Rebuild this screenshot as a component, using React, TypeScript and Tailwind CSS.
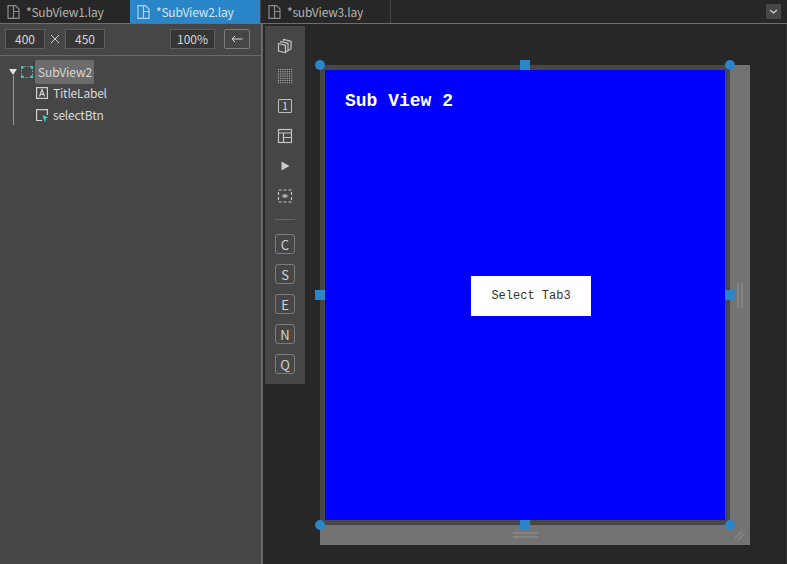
import { ReactNode } from "react";

function FileIcon({ color }: { color: string }) {
  return (
    <svg width="13" height="14" viewBox="0 0 13 14" fill="none" stroke={color} strokeWidth="1.2">
      <path d="M1 .6h7.500l3.500 3.500v9.300H1z" />
      <path d="M6.500 .6v12.800M6.500 6.500H12" />
    </svg>
  );
}

function Tab({ label, active, width }: { label: string; active?: boolean; width: string }) {
  return (
    <div className={`flex h-[23px] items-center gap-[6px] pl-[7px] ${width} ${active ? "bg-[#2a86c9] text-[#d6e6f2]" : "bg-[#272727] text-[#b4b4b4]"}`}>
      <FileIcon color={active ? "#b5d3ea" : "#8c8c8c"} />
      <span className="text-[12px] leading-none tracking-[-0.2px]">{label}</span>
    </div>
  );
}

function Field({ children, width }: { children: ReactNode; width: string }) {
  return (
    <div className={`flex h-5 items-center justify-center border border-[#5e5e5e] bg-[#363636] text-[12px] text-[#d8d8d8] ${width}`}>
      {children}
    </div>
  );
}

function TreeRow({ icon, label }: { icon: ReactNode; label: string }) {
  return (
    <div className="flex h-[22px] items-center gap-[5px] pl-9 text-[12px] tracking-[-0.2px] text-[#d8d8d8]">
      {icon}
      <span>{label}</span>
    </div>
  );
}

function ToolIcon({ children }: { children: ReactNode }) {
  return (
    <div className="flex h-[30px] w-10 items-center justify-center">
      <svg width="16" height="16" viewBox="0 0 16 16" fill="none" stroke="#c4c4c4" strokeWidth="1.2">
        {children}
      </svg>
    </div>
  );
}

function KeyButton({ label }: { label: string }) {
  return (
    <div className="flex h-[30px] w-10 items-center justify-center">
      <div className="flex h-5 w-5 items-center justify-center rounded-[3px] border border-[#7c7c7c] text-[13px] leading-none text-[#d4d4d4]">
        {label}
      </div>
    </div>
  );
}

const dots = Array.from({ length: 49 }, (_, i) => ({ x: 1.5 + (i % 7) * 2.2, y: 1.5 + Math.floor(i / 7) * 2.2 }));

function Handle({ className }: { className: string }) {
  return <div className={`absolute h-2.5 w-2.5 bg-[#2a86c9] ${className}`} />;
}

export default function App() {
  return (
    <div className="flex h-[564px] w-[787px] flex-col overflow-hidden bg-[#272727] font-['Noto_Sans_CJK_KR','Noto_Sans',sans-serif]">
      <div className="flex h-6 shrink-0 border-b border-[#6e6e6e] bg-[#272727]">
        <Tab label="*SubView1.lay" width="w-[130px]" />
        <Tab label="*SubView2.lay" active width="w-[130px]" />
        <div className="h-[23px] w-px bg-[#444444]" />
        <Tab label="*subView3.lay" width="w-[129px]" />
        <div className="h-[23px] w-px bg-[#444444]" />
        <div className="ml-auto mr-[6px] mt-1 flex h-[15px] w-[15px] items-center justify-center bg-[#464646]">
          <svg width="9" height="6" viewBox="0 0 9 6" fill="none" stroke="#d0d0d0" strokeWidth="1.3">
            <path d="M1 1l3.500 3L8 1" />
          </svg>
        </div>
      </div>

      <div className="flex min-h-0 flex-1">
        <div className="w-[261px] shrink-0 bg-[#464646]">
          <div className="flex h-8 items-center border-b border-[#6a6a6a] pb-[1px] pl-[5px]">
            <Field width="w-10">400</Field>
            <svg className="mx-[5px]" width="10" height="10" viewBox="0 0 10 10" stroke="#cccccc" strokeWidth="1">
              <path d="M1 1l8 8M9 1l-8 8" />
            </svg>
            <Field width="w-10">450</Field>
            <Field width="ml-[65px] w-[45px]">100%</Field>
            <div className="ml-[9px] flex h-5 w-[26px] items-center justify-center rounded-[2px] border border-[#7c7c7c] text-[#d8d8d8]">
              <svg width="12" height="8" viewBox="0 0 12 8" fill="none" stroke="#d8d8d8" strokeWidth="1">
                <path d="M11.500 4H1M4 1L1 4l3 3" />
              </svg>
            </div>
          </div>

          <div className="relative pt-1">
            <div className="absolute left-[13px] top-[20px] h-[49px] w-px bg-[#57b8ad]" />
            <div className="flex h-6 items-center pl-[9px]">
              <div className="h-0 w-0 border-x-[4px] border-t-[6px] border-x-transparent border-t-[#e0e0e0]" />
              <svg className="ml-[4px]" width="12" height="12" viewBox="0 0 12 12" fill="none">
                <rect x=".5" y=".5" width="11" height="11" stroke="#9a9a9a" strokeDasharray="1.500 1.500" />
                <path d="M0 0h2.500v2.500H0zM9.500 0H12v2.500H9.500zM0 9.500h2.500V12H0zM9.500 9.500H12V12H9.500z" fill="#35d6c2" />
              </svg>
              <div className="ml-[2px] flex h-6 w-[59px] items-center rounded-[2px] bg-[#6c6c6c] pl-[3px] text-[12px] tracking-[-0.1px] text-[#d8d8d8]">SubView2</div>
            </div>
            <div className="-mt-[2px]">
              <TreeRow
                label="TitleLabel"
                icon={
                  <svg width="12" height="12" viewBox="0 0 12 12" fill="none" stroke="#d0d0d0" strokeWidth="1.200">
                    <rect x=".6" y=".6" width="10.800" height="10.800" />
                    <path d="M3.500 9.500L6 2.500l2.500 7M4.300 7.300h3.400" />
                  </svg>
                }
              />
              <TreeRow
                label="selectBtn"
                icon={
                  <svg width="12" height="13" viewBox="0 0 12 13" fill="none">
                    <path d="M6 11.500H.6V.6h10.800V6" stroke="#d0d0d0" strokeWidth="1.200" />
                    <path d="M7 6.500l4.500 2-1.800.8L8.800 12.500z" fill="#35d6c2" stroke="#35d6c2" strokeWidth=".6" />
                  </svg>
                }
              />
            </div>
          </div>
        </div>

        <div className="w-[2px] shrink-0 bg-[#6b6b6b]" />

        <div className="flex min-w-0 flex-1 items-start">
          <div className="ml-[2px] mt-[2px] flex w-10 shrink-0 flex-col items-center bg-[#464646] pb-[5px] pt-[5px]">
            <ToolIcon>
              <path d="M1.500 5.500l7 1.800v7.500l-7-1.800z" />
              <path d="M4 5V3.500l7 1.800v7.500l-2.500 1" />
              <path d="M6.500 3V1.500l7.500 1.800v7.700l-3 1.500" />
            </ToolIcon>
            <ToolIcon>
              <g fill="#bcbcbc" stroke="none">
                {dots.map((d) => (
                  <rect key={`${d.x}-${d.y}`} x={d.x - 0.5} y={d.y - 0.5} width="1" height="1" />
                ))}
              </g>
            </ToolIcon>
            <div className="flex h-[30px] w-10 items-center justify-center">
              <div className="flex h-[14px] w-[14px] items-center justify-center rounded-[1px] border border-[#bdbdbd] text-[10px] leading-none text-[#d4d4d4]">1</div>
            </div>
            <ToolIcon>
              <rect x="1.500" y="1.500" width="13" height="13" />
              <path d="M1.500 5h13M6.500 5v9.500M6.500 9.500h8" />
            </ToolIcon>
            <ToolIcon>
              <path d="M4.500 3.500l8 4.500-8 4.500z" fill="#c8c8c8" stroke="none" />
            </ToolIcon>
            <ToolIcon>
              <rect x="1.500" y="2" width="13" height="12" strokeDasharray="3 2" />
              <path d="M4.500 8c1-1.500 2.200-2 3.500-2s2.500.5 3.500 2c-1 1.500-2.200 2-3.500 2s-2.500-.5-3.500-2z" fill="#8a8a8a" stroke="none" />
              <circle cx="8" cy="8" r="1" fill="#d0d0d0" stroke="none" />
            </ToolIcon>
            <div className="mb-[9px] mt-[8px] h-px w-5 bg-[#666666]" />
            {["C", "S", "E", "N", "Q"].map((k) => (
              <KeyButton key={k} label={k} />
            ))}
          </div>

          <div className="relative ml-[15px] mt-[41px] h-[480px] w-[430px] bg-[#737373]">
            <div className="h-[460px] w-[410px] border-[5px] border-[#474747]">
              <div className="flex h-[450px] w-[400px] flex-col bg-[#0000ff]">
                <div className="pl-5 pt-[21px] font-['Liberation_Mono',monospace] text-[18px] font-bold leading-5 text-white">Sub View 2</div>
                <div className="ml-[146px] mt-[165px] flex h-10 w-[120px] items-center justify-center bg-white font-['Liberation_Mono',monospace] text-[12px] text-[#333333]">
                  Select Tab3
                </div>
              </div>
            </div>

            <Handle className="-left-[5px] -top-[5px] rounded-full" />
            <Handle className="left-[200px] -top-[5px]" />
            <Handle className="left-[405px] -top-[5px] rounded-full" />
            <Handle className="-left-[5px] top-[225px]" />
            <Handle className="left-[405px] top-[225px]" />
            <Handle className="-left-[5px] top-[455px] rounded-full" />
            <Handle className="left-[200px] top-[455px]" />
            <Handle className="left-[405px] top-[455px] rounded-full" />

            <div className="absolute left-[417px] top-[218px] h-[25px] w-[2px] bg-[#848484]" />
            <div className="absolute left-[421px] top-[218px] h-[25px] w-[2px] bg-[#848484]" />
            <div className="absolute left-[193px] top-[467px] h-[2px] w-[25px] bg-[#848484]" />
            <div className="absolute left-[193px] top-[471px] h-[2px] w-[25px] bg-[#848484]" />
            <svg className="absolute left-[414px] top-[464px]" width="12" height="12" viewBox="0 0 12 12" stroke="#848484" strokeWidth="1.600">
              <path d="M1 9l7-7M4 11l7-7" />
            </svg>
          </div>
        </div>
        <div className="w-px shrink-0 bg-[#333333]" />
      </div>
    </div>
  );
}
